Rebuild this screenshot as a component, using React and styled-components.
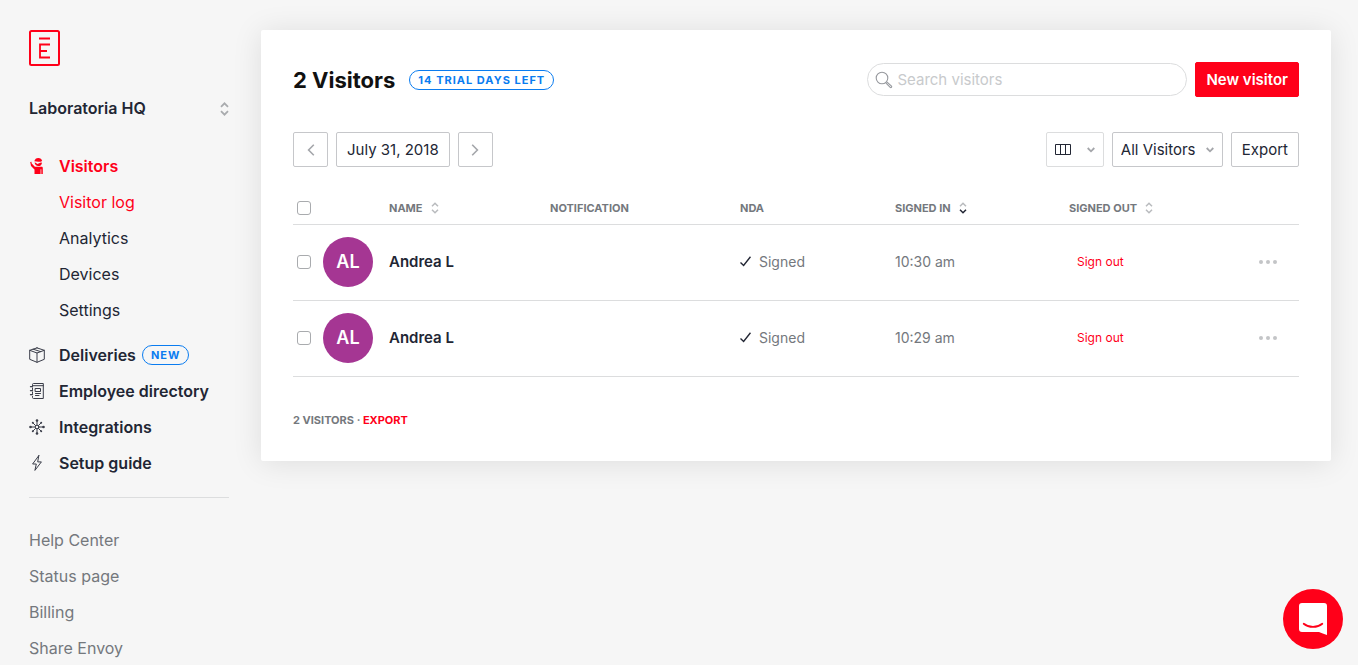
import React from "react";
import styled, { createGlobalStyle, css } from "styled-components";

const RED = "#ff0019";
const INK = "#222634";
const GREY = "#74787d";
const BLUE = "#0a7cf0";
const LINE = "#dcddde";

const GlobalStyle = createGlobalStyle`
  *, *::before, *::after { box-sizing: border-box; }
  body {
    margin: 0;
    background: #f6f6f6;
    color: ${INK};
    font-family: Inter, "Liberation Sans", sans-serif;
    font-size: 15px;
    line-height: 20px;
  }
  button, input, select { font: inherit; color: inherit; }
  button { cursor: pointer; }
  a { color: inherit; text-decoration: none; }
  ul { list-style: none; margin: 0; padding: 0; }
  svg { display: block; flex: none; }
`;

const Shell = styled.div`
  display: flex;
  align-items: flex-start;
  min-height: 100vh;
`;

const Sidebar = styled.aside`
  flex: none;
  width: 261px;
  padding: 30px 32px 0 29px;
  font-size: 16px;
`;

const LocationPicker = styled.div`
  position: relative;
  margin: 32px 0 38px;
  select {
    display: block;
    width: 100%;
    height: 20px;
    padding: 0;
    border: 0;
    background: none;
    appearance: none;
    font-weight: 600;
  }
  svg {
    position: absolute;
    right: 0;
    top: 4px;
    pointer-events: none;
  }
`;

const NavList = styled.ul`
  display: flex;
  flex-direction: column;
  gap: 16px;
`;

const NavLink = styled.a`
  display: flex;
  align-items: center;
  gap: 14px;
  font-weight: 600;
  color: ${(p) => (p.$active ? RED : INK)};
`;

const NavLabel = styled.span`
  display: flex;
  align-items: center;
  gap: 6px;
`;

const SubList = styled(NavList)`
  margin: 16px 0 9px 30px;
`;

const SubLink = styled.a`
  display: block;
  color: ${(p) => (p.$active ? RED : INK)};
`;

const Divider = styled.hr`
  margin: 24px 0 32px;
  height: 1px;
  border: 0;
  background: ${LINE};
`;

const FooterLink = styled.a`
  display: block;
  color: ${GREY};
`;

const Pill = styled.span`
  height: 20px;
  padding: 0 8px;
  border: 1px solid ${BLUE};
  border-radius: 10px;
  color: ${BLUE};
  font-size: 11px;
  font-weight: 700;
  line-height: 18px;
  letter-spacing: 1px;
  white-space: nowrap;
`;

const Main = styled.main`
  flex: 1;
  min-width: 0;
  padding: 30px 27px 32px 0;
`;

const Card = styled.section`
  padding: 32px 32px 30px;
  border-radius: 2px;
  background: #fff;
  box-shadow: 0 2px 30px rgba(0, 0, 0, 0.1);
`;

const Bar = styled.div`
  display: flex;
  align-items: center;
  justify-content: space-between;
  gap: 16px;
`;

const Toolbar = styled(Bar)`
  margin: 35px 0 24px;
`;

const Group = styled.div`
  display: flex;
  align-items: center;
  gap: 8px;
`;

const TitleGroup = styled(Group)`
  gap: 14px;
`;

const Title = styled.h1`
  margin: 0;
  color: #111;
  font-size: 22px;
  font-weight: 700;
  line-height: 32px;
`;

const Search = styled.label`
  position: relative;
  display: block;
  width: 320px;
  svg {
    position: absolute;
    left: 8px;
    top: 8px;
  }
  input {
    display: block;
    width: 100%;
    height: 33px;
    padding: 0 16px 0 29px;
    border: 1px solid ${LINE};
    border-radius: 17px;
    background: #fff;
    outline: 0;
  }
  input::placeholder { color: #c8cacc; opacity: 1; }
`;

const boxed = css`
  height: 35px;
  border: 1px solid ${(p) => (p.$light ? LINE : "#c6c7ca")};
  border-radius: 2px;
  background: #fff;
`;

const Button = styled.button`
  ${boxed}
  display: flex;
  align-items: center;
  justify-content: center;
  padding: 0 10px;
  white-space: nowrap;
`;

const SquareButton = styled(Button)`
  width: 35px;
  padding: 0;
`;

const ColumnsButton = styled(Button)`
  gap: 16px;
  padding: 0 8px;
`;

const PrimaryButton = styled(Button)`
  border-color: ${RED};
  background: ${RED};
  color: #fff;
  font-weight: 600;
`;

const Filter = styled.div`
  position: relative;
  select {
    ${boxed}
    display: block;
    padding: 0 26px 0 8px;
    appearance: none;
  }
  svg {
    position: absolute;
    right: 9px;
    top: 15px;
    pointer-events: none;
  }
`;

const Table = styled.table`
  width: 100%;
  table-layout: fixed;
  border-collapse: separate;
  border-spacing: 0;
`;

const Th = styled.th`
  height: 34px;
  padding: 0;
  border-bottom: 1px solid ${LINE};
  color: ${GREY};
  font-size: 11px;
  font-weight: 700;
  text-align: left;
`;

const SortButton = styled.button`
  display: flex;
  align-items: center;
  gap: 8px;
  padding: 0;
  border: 0;
  background: none;
`;

const Td = styled.td`
  height: 76px;
  padding: 0 0 2px;
  border-bottom: 1px solid ${LINE};
  color: ${GREY};
  font-size: 14px;
`;

const NameCell = styled(Td)`
  color: ${INK};
  font-size: 15px;
  font-weight: 600;
`;

const Picker = styled.div`
  display: flex;
  align-items: center;
  gap: 12px;
  padding-left: 4px;
`;

const Checkbox = styled.input.attrs({ type: "checkbox" })`
  display: block;
  width: 14px;
  height: 14px;
  margin: 0;
  border: 1px solid #a9abae;
  border-radius: 3px;
  background: #fff;
  appearance: none;
  &:checked { background: ${RED}; }
`;

const Avatar = styled.span`
  display: grid;
  place-items: center;
  width: 50px;
  height: 50px;
  border-radius: 50%;
  background: #a53693;
  color: #fff;
  font-size: 18px;
  font-weight: 600;
`;

const SignOut = styled.button`
  padding: 4px 8px;
  border: 0;
  background: none;
  color: ${RED};
  font-size: 12px;
`;

const MoreButton = styled.button`
  display: block;
  margin: 0 17px 0 auto;
  padding: 4px;
  border: 0;
  background: none;
`;

const Summary = styled.p`
  margin: 32px 0 0;
  color: ${GREY};
  font-size: 11px;
  font-weight: 700;
  line-height: 22px;
  a { color: ${RED}; }
`;

const ChatButton = styled.button`
  position: fixed;
  right: 15px;
  bottom: 16px;
  display: grid;
  place-items: center;
  width: 60px;
  height: 60px;
  padding: 0;
  border: 0;
  border-radius: 50%;
  background: ${RED};
`;

const Logo = () => (
  <svg width="31" height="36" viewBox="0 0 31 36" fill="none" stroke={RED} strokeWidth="2" role="img" aria-label="Envoy">
    <rect x="1" y="1" width="29" height="34" rx="1.5" />
    <path d="M10 8.5h11M21 14.5H11v13h10M11 21h7" strokeWidth="1.8" />
  </svg>
);

const Updown = ({ width = 8, up = "#a9abae", down = up, weight = 1.5 }) => (
  <svg width={width} height={width === 8 ? 12 : 14} viewBox={width === 8 ? "0 0 8 12" : "0 0 9 14"} fill="none" strokeWidth={weight}>
    {width === 8 ? (
      <>
        <path d="M1 4.2 4 1.2l3 3" stroke={up} />
        <path d="m1 7.8 3 3 3-3" stroke={down} />
      </>
    ) : (
      <>
        <path d="M1 4.8 4.5 1.3 8 4.8" stroke={up} />
        <path d="m1 9.2 3.5 3.5L8 9.2" stroke={down} />
      </>
    )}
  </svg>
);

const ChevronDown = () => (
  <svg width="8" height="6" viewBox="0 0 8 6" fill="none" stroke="#a4a6aa" strokeWidth="1.8">
    <path d="m.7 1 3.3 3.3L7.3 1" />
  </svg>
);

const Arrow = ({ d }) => (
  <svg width="8" height="12" viewBox="0 0 8 12" fill="none" stroke="#a4a6aa" strokeWidth="1.6">
    <path d={d} />
  </svg>
);

const LineIcon = ({ children }) => (
  <svg width="16" height="16" viewBox="0 0 16 16" fill="none" stroke="#3a3d49" strokeWidth="1" strokeLinejoin="round" strokeLinecap="round">
    {children}
  </svg>
);

const VisitorIcon = () => (
  <svg width="16" height="16" viewBox="0 0 16 16" fill={RED}>
    <path d="M5.3 3.3C5.8 1.2 7.3 0 9.3 0c2 0 3.5 1.1 3.8 2.9-.9.7-2.2 1-3.8.9-1.5-.1-2.8-.2-4-.5Z" />
    <path d="M5.6 4.6c.8.1 1.4.3 2.1.9.6.5 1.2.5 1.8 0 .9-.7 2-.9 3.5-1.1-.1 2.2-1.600 3.700-3.700 3.700-2 0-3.400-1.400-3.700-3.500Z" />
    <path d="M1.200 3.900 2.400 3.800l.3 1.600 3.200 3.300h6.600c.8 0 1.300.5 1.300 1.200v6h-1.500v-4.600h-.7v4.700H5.500v-4.500L2 8.100Z" />
  </svg>
);

const BoxIcon = () => (
  <LineIcon>
    <path d="M8 .9 15.3 3.3v9L8 15.3.7 12.3v-9L8 .9ZM.7 3.3 8 6l7.3-2.7M8 6v9.3M4.2 2.2 11.6 4.6" />
  </LineIcon>
);

const BookIcon = () => (
  <LineIcon>
    <path d="M3.500 2.600V1.500c0-.6.4-1 1-1h9.800v15H4.500c-.6 0-1-.4-1-1v-1M3.500 5v1.500M3.500 9v1.500M4 2.700h10.300" />
    <path d="M1.500 3.700h2M1.500 7.700h2M1.500 11.700h2" strokeWidth="1.300" />
    <path d="M6.500 5.500h5v3h-5zM6.500 10.500h5M6.500 12.500h3.500" />
  </LineIcon>
);

const HubIcon = () => (
  <LineIcon>
    <path d="M8 2v4M8 10v4M2 8h4M10 8h4M4 4l2.600 2.600M12 4 9.400 6.600M4 12l2.600-2.600M12 12 9.400 9.400" />
    <circle cx="8" cy="8" r="1.800" />
    <g fill="#3a3d49" stroke="none">
      <circle cx="8" cy="1.500" r="1.300" />
      <circle cx="8" cy="14.500" r="1.300" />
      <circle cx="1.500" cy="8" r="1.300" />
      <circle cx="14.500" cy="8" r="1.300" />
      <circle cx="3.800" cy="3.800" r="1" />
      <circle cx="12.200" cy="3.800" r="1" />
      <circle cx="3.800" cy="12.200" r="1" />
      <circle cx="12.200" cy="12.200" r="1" />
    </g>
  </LineIcon>
);

const BoltIcon = () => (
  <LineIcon>
    <path d="M9.8.6 3.6 9h3.700L5.900 15.400 12.400 6.900H8.700L9.800.6Z" />
  </LineIcon>
);

const SearchIcon = () => (
  <svg width="18" height="18" viewBox="0 0 18 18" fill="none" stroke="#97999e" strokeWidth="1.1">
    <circle cx="7" cy="7" r="5.8" />
    <path d="m10.800 11.800 4.400 4.600c.9.700 2-.300 1.300-1.200l-4.700-4.400" />
  </svg>
);

const ColumnsIcon = () => (
  <svg width="16" height="11" viewBox="0 0 16 11" fill="none" stroke={INK}>
    <path d="M.5.5h15v10H.5zM5.500.5v10M10.500.5v10" />
  </svg>
);

const Check = () => (
  <svg width="11" height="11" viewBox="0 0 11 11" fill="none" stroke={INK} strokeWidth="1.4">
    <path d="M.5 6.600 3.600 9.500 10.500.8" />
  </svg>
);

const Signed = styled.span`
  display: flex;
  align-items: center;
  gap: 8px;
`;

const mainLinks = [
  { label: "Deliveries", icon: <BoxIcon />, badge: "NEW" },
  { label: "Employee directory", icon: <BookIcon /> },
  { label: "Integrations", icon: <HubIcon /> },
  { label: "Setup guide", icon: <BoltIcon /> },
];

const visitors = [
  { id: 1, initials: "AL", name: "Andrea L", time: "10:30 am" },
  { id: 2, initials: "AL", name: "Andrea L", time: "10:29 am" },
];

const columnWidths = [96, 161, 190, 155, 174, 230];

export default function App() {
  return (
    <>
      <GlobalStyle />
      <Shell>
        <Sidebar>
          <Logo />
          <LocationPicker>
            <select aria-label="Location" defaultValue="hq">
              <option value="hq">Laboratoria HQ</option>
            </select>
            <Updown width={9} weight={1.8} />
          </LocationPicker>
          <nav aria-label="Main">
            <NavList>
              <li>
                <NavLink href="#visitors" $active>
                  <VisitorIcon />
                  Visitors
                </NavLink>
                <SubList>
                  {["Visitor log", "Analytics", "Devices", "Settings"].map((label, i) => (
                    <li key={label}>
                      <SubLink href="#visitors" $active={i === 0}>{label}</SubLink>
                    </li>
                  ))}
                </SubList>
              </li>
              {mainLinks.map((item) => (
                <li key={item.label}>
                  <NavLink href="#section">
                    {item.icon}
                    <NavLabel>
                      {item.label}
                      {item.badge && <Pill>{item.badge}</Pill>}
                    </NavLabel>
                  </NavLink>
                </li>
              ))}
            </NavList>
          </nav>
          <Divider />
          <NavList>
            {["Help Center", "Status page", "Billing", "Share Envoy"].map((label) => (
              <li key={label}>
                <FooterLink href="#more">{label}</FooterLink>
              </li>
            ))}
          </NavList>
        </Sidebar>

        <Main>
          <Card>
            <Bar>
              <TitleGroup>
                <Title>2 Visitors</Title>
                <Pill>14 TRIAL DAYS LEFT</Pill>
              </TitleGroup>
              <Group>
                <Search>
                  <SearchIcon />
                  <input type="search" placeholder="Search visitors" aria-label="Search visitors" />
                </Search>
                <PrimaryButton type="button">New visitor</PrimaryButton>
              </Group>
            </Bar>

            <Toolbar>
              <Group>
                <SquareButton type="button" aria-label="Previous day">
                  <Arrow d="M6.800.8 1.600 6l5.200 5.200" />
                </SquareButton>
                <Button type="button">July 31, 2018</Button>
                <SquareButton type="button" aria-label="Next day">
                  <Arrow d="M1.200.8 6.400 6l-5.200 5.200" />
                </SquareButton>
              </Group>
              <Group>
                <ColumnsButton type="button" $light aria-label="Choose columns" aria-haspopup="menu">
                  <ColumnsIcon />
                  <ChevronDown />
                </ColumnsButton>
                <Filter>
                  <select aria-label="Visitor filter" defaultValue="all">
                    <option value="all">All Visitors</option>
                  </select>
                  <ChevronDown />
                </Filter>
                <Button type="button">Export</Button>
              </Group>
            </Toolbar>

            <Table>
              <colgroup>
                {columnWidths.map((width, i) => (
                  <col key={i} width={width} />
                ))}
              </colgroup>
              <thead>
                <tr>
                  <Th>
                    <Picker>
                      <Checkbox aria-label="Select all visitors" />
                    </Picker>
                  </Th>
                  <Th>
                    <SortButton type="button">NAME <Updown up="#b9bbbe" /></SortButton>
                  </Th>
                  <Th>NOTIFICATION</Th>
                  <Th>NDA</Th>
                  <Th aria-sort="descending">
                    <SortButton type="button">SIGNED IN <Updown up="#b9bbbe" down={INK} /></SortButton>
                  </Th>
                  <Th>
                    <SortButton type="button">SIGNED OUT <Updown up="#b9bbbe" /></SortButton>
                  </Th>
                </tr>
              </thead>
              <tbody>
                {visitors.map((v) => (
                  <tr key={v.id}>
                    <Td>
                      <Picker>
                        <Checkbox aria-label={`Select ${v.name}`} />
                        <Avatar>{v.initials}</Avatar>
                      </Picker>
                    </Td>
                    <NameCell>{v.name}</NameCell>
                    <Td />
                    <Td>
                      <Signed><Check />Signed</Signed>
                    </Td>
                    <Td>{v.time}</Td>
                    <Td>
                      <Bar>
                        <SignOut type="button">Sign out</SignOut>
                        <MoreButton type="button" aria-label="More actions">
                          <svg width="20" height="6" viewBox="0 0 20 6" fill="#c3c5c7">
                            <circle cx="3" cy="3" r="2" />
                            <circle cx="10" cy="3" r="2" />
                            <circle cx="17" cy="3" r="2" />
                          </svg>
                        </MoreButton>
                      </Bar>
                    </Td>
                  </tr>
                ))}
              </tbody>
            </Table>

            <Summary>
              2 VISITORS · <a href="#export">EXPORT</a>
            </Summary>
          </Card>
        </Main>
      </Shell>
      <ChatButton type="button" aria-label="Open chat">
        <svg width="28" height="32" viewBox="0 0 28 32" fill="none">
          <path d="M3 0h22a3 3 0 0 1 3 3v29c-3-.8-5.500-1.900-8-3H3a3 3 0 0 1-3-3V3a3 3 0 0 1 3-3Z" fill="#fff" />
          <path d="M4.700 20.800c5.200 4.200 13.400 4.200 18.600 0" stroke={RED} strokeWidth="1.800" strokeLinecap="round" />
        </svg>
      </ChatButton>
    </>
  );
}
